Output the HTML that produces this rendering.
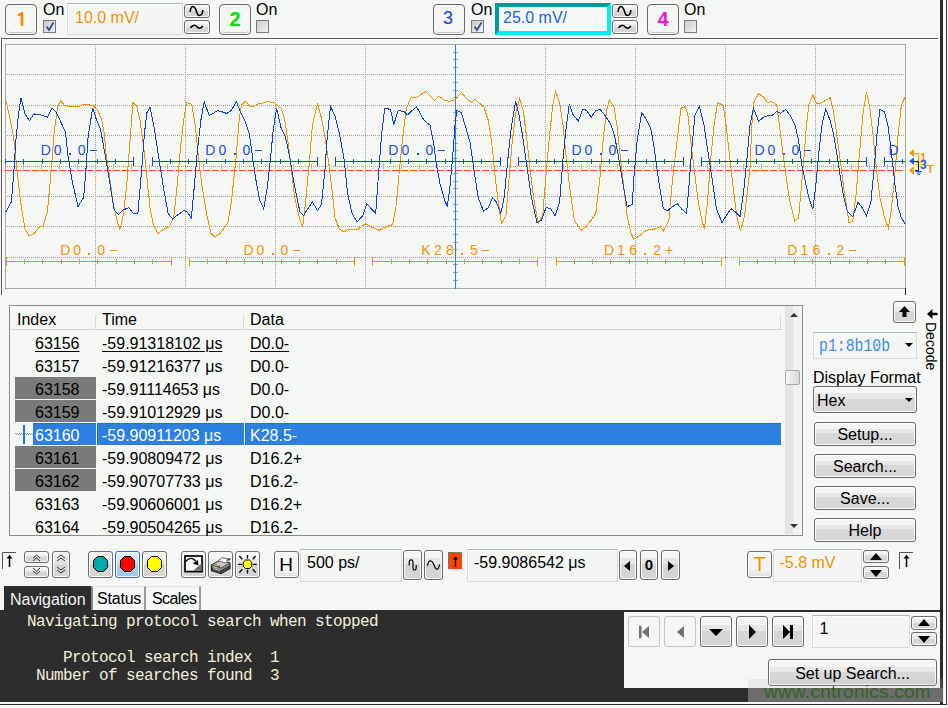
<!DOCTYPE html>
<html><head><meta charset="utf-8"><style>
*{box-sizing:border-box;margin:0;padding:0}
html,body{width:948px;height:708px;overflow:hidden;background:#f5f7f4;font-family:"Liberation Sans",sans-serif;font-size:16px;color:#000}
.a{position:absolute}
.cbtn{position:absolute;border:1.3px solid #6a6a6a;border-radius:4px;background:#f5f7f4;text-align:center;font-size:19px;font-weight:bold;line-height:29px}
.cbtn:after{content:"";position:absolute;left:2px;right:2px;bottom:1px;height:2px;border-bottom:1px solid #c4c4c4;border-radius:0 0 3px 3px}
.chk{position:absolute;width:13px;height:13px;border:1px solid #7a7a7a;background:linear-gradient(135deg,#c9c9c9,#f4f4f4)}
.inp{position:absolute;border:1px solid #d6dae0;border-top-color:#b0b6be;background:#f4f6f3;box-shadow:inset 1px 1px 0 #fcfcfc}
.gb{position:absolute;border:1px solid #6c6c6c;border-radius:3px;box-shadow:inset 0 0 0 1px #fafafa;background:linear-gradient(#f5f5f5 0%,#f5f5f5 26%,#e7e7e7 26%,#e7e7e7 48%,#d5d5d5 48%,#d5d5d5 100%)}
.btn{position:absolute;border:1px solid #6a6a6a;border-radius:3px;box-shadow:inset 0 0 0 1px #fafafa;background:linear-gradient(#f5f5f5 0%,#f5f5f5 26%,#e8e8e8 26%,#e8e8e8 47%,#d7d7d7 47%,#d7d7d7 100%);text-align:center;font-size:16px;line-height:24px}
.row{position:absolute;height:22px;font-size:16px;line-height:22px;white-space:pre}
.mono{font-family:"Liberation Mono",monospace}
</style></head><body>

<div class="cbtn" style="left:5px;top:4px;width:32px;height:31px;color:#ff8a00"><svg width="30" height="29" style="position:absolute;left:-1px;top:-1px"><path d="M15.6 7.9 H18.2 V22 H15.6 Z M12.8 10.3 L15.8 7.9 V11.4 L12.8 12.3 Z" fill="#ff8a00"/></svg></div>
<div class="cbtn" style="left:219px;top:4px;width:32px;height:31px;color:#00e000"><span style="font-size:20px;line-height:28px">2</span></div>
<div class="cbtn" style="left:433px;top:4px;width:32px;height:31px;color:#1040e0"><span style="font-weight:normal;font-size:18px;position:relative;top:-2px;left:-1px">3</span></div>
<div class="cbtn" style="left:647px;top:4px;width:32px;height:31px;color:#ff10c8"><span style="font-size:20px;line-height:28px">4</span></div>
<div class="a" style="left:43px;top:1px;font-size:16px;line-height:18px">On</div>
<div class="a" style="left:256px;top:1px;font-size:16px;line-height:18px">On</div>
<div class="a" style="left:471px;top:1px;font-size:16px;line-height:18px">On</div>
<div class="a" style="left:684px;top:1px;font-size:16px;line-height:18px">On</div>
<div class="chk" style="left:43px;top:20px"><svg width="11" height="11" style="position:absolute;left:0;top:0"><path d="M2.5 5.5 L5 9 L9.5 1.5" stroke="#3a4f9a" stroke-width="1.8" fill="none"/></svg></div>
<div class="chk" style="left:256px;top:20px"></div>
<div class="chk" style="left:471px;top:20px"><svg width="11" height="11" style="position:absolute;left:0;top:0"><path d="M2.5 5.5 L5 9 L9.5 1.5" stroke="#3a4f9a" stroke-width="1.8" fill="none"/></svg></div>
<div class="chk" style="left:684px;top:20px"></div>
<div class="inp" style="left:67px;top:3px;width:116px;height:32px;color:#f59000;font-size:16px;line-height:28px;padding-left:7px">10.0 mV/</div>
<div class="a" style="left:495px;top:3px;width:116px;height:32px;border:4px solid;border-color:#009a9a #00eeee #00eeee #009a9a;background:#f6f8f5;color:#2060e0;font-size:16px;line-height:22px;padding-left:4px">25.0 mV/</div>
<div class="gb" style="left:184px;top:4px;width:26px;height:14px"><svg width="24" height="12" style="position:absolute;left:0;top:0"><path d="M5.2 7 C5.2 2.5,7.5 0.8,9 1.8 C10 2.5,10.8 4,11.2 5.5 C12 8.5,13.2 10.5,14.3 10.5 C16 10.5,17.8 8.5,17.8 5" stroke="#000" stroke-width="1.6" fill="none"/></svg></div>
<div class="gb" style="left:184px;top:20px;width:26px;height:14px"><svg width="24" height="12" style="position:absolute;left:0;top:0"><path d="M5.5 6.8 C7.5 4,10 3.5,12 5.8 C13.5 7.8,16 7.8,17.8 5" stroke="#000" stroke-width="1.5" fill="none"/></svg></div>
<div class="gb" style="left:612px;top:4px;width:26px;height:14px"><svg width="24" height="12" style="position:absolute;left:0;top:0"><path d="M5.2 7 C5.2 2.5,7.5 0.8,9 1.8 C10 2.5,10.8 4,11.2 5.5 C12 8.5,13.2 10.5,14.3 10.5 C16 10.5,17.8 8.5,17.8 5" stroke="#000" stroke-width="1.6" fill="none"/></svg></div>
<div class="gb" style="left:612px;top:20px;width:26px;height:14px"><svg width="24" height="12" style="position:absolute;left:0;top:0"><path d="M5.5 6.8 C7.5 4,10 3.5,12 5.8 C13.5 7.8,16 7.8,17.8 5" stroke="#000" stroke-width="1.5" fill="none"/></svg></div>
<div class="a" style="left:1px;top:38px;width:937px;height:1px;background:#5a5a5a"></div><div class="a" style="left:2px;top:39px;width:938px;height:1px;background:#ffffff"></div>
<div class="a" style="left:1px;top:38px;width:1px;height:257px;background:#5a5a5a"></div><div class="a" style="left:2px;top:39px;width:1px;height:256px;background:#ffffff"></div>
<div class="a" style="left:940px;top:0px;width:3px;height:705px;background:#2b2b2b"></div>
<div class="a" style="left:946px;top:0px;width:1px;height:705px;background:#3a3a3a"></div>
<svg class="a" style="left:0;top:0" width="948" height="300">
<path d="M6 45.5 H905 M6.5 45 V288" stroke="#ffffff" stroke-width="1"/>
<rect x="5.5" y="44.5" width="900" height="244" fill="none" stroke="#a8a8a8" stroke-width="1"/>
<path d="M95.5 44 V288 M185.5 44 V288 M275.5 44 V288 M365.5 44 V288 M455.5 44 V288 M545.5 44 V288 M635.5 44 V288 M725.5 44 V288 M815.5 44 V288 M5 74.5 H905 M5 105.5 H905 M5 135.5 H905 M5 166.5 H905 M5 196.5 H905 M5 226.5 H905 M5 257.5 H905" stroke="#a0a0a0" stroke-width="1" stroke-dasharray="1 1" fill="none"/>
<path d="M23.5 164 V169 M41.5 164 V169 M59.5 164 V169 M77.5 164 V169 M95.5 164 V169 M113.5 164 V169 M131.5 164 V169 M149.5 164 V169 M167.5 164 V169 M185.5 164 V169 M203.5 164 V169 M221.5 164 V169 M239.5 164 V169 M257.5 164 V169 M275.5 164 V169 M293.5 164 V169 M311.5 164 V169 M329.5 164 V169 M347.5 164 V169 M365.5 164 V169 M383.5 164 V169 M401.5 164 V169 M419.5 164 V169 M437.5 164 V169 M455.5 164 V169 M473.5 164 V169 M491.5 164 V169 M509.5 164 V169 M527.5 164 V169 M545.5 164 V169 M563.5 164 V169 M581.5 164 V169 M599.5 164 V169 M617.5 164 V169 M635.5 164 V169 M653.5 164 V169 M671.5 164 V169 M689.5 164 V169 M707.5 164 V169 M725.5 164 V169 M743.5 164 V169 M761.5 164 V169 M779.5 164 V169 M797.5 164 V169 M815.5 164 V169 M833.5 164 V169 M851.5 164 V169 M869.5 164 V169 M887.5 164 V169" stroke="#b0b0b0" stroke-width="1"/>
<path d="M5 170.5 H905" stroke="#ff4a10" stroke-width="1.1" stroke-dasharray="7 2"/>
<path d="M453 52.5 H458 M453 59.5 H458 M453 67.5 H458 M453 82.5 H458 M453 90.5 H458 M453 97.5 H458 M453 112.5 H458 M453 120.5 H458 M453 128.5 H458 M453 143.5 H458 M453 150.5 H458 M453 158.5 H458 M453 173.5 H458 M453 181.5 H458 M453 188.5 H458 M453 204.5 H458 M453 211.5 H458 M453 219.5 H458 M453 234.5 H458 M453 242.5 H458 M453 249.5 H458 M453 264.5 H458 M453 272.5 H458 M453 280.5 H458" stroke="#a8a8a8" stroke-width="1"/>
<path d="M455.5 45 V289" stroke="#2a80e0" stroke-width="1.1"/>
<polyline points="5.6,99.2 9.0,114.0 13.6,136.5 17.0,170.0 20.3,200.0 24.9,229.0 29.4,236.0 33.9,233.7 39.5,226.9 42.9,226.9 47.5,211.0 50.8,175.0 54.2,132.0 57.6,107.0 60.6,100.8 64.4,105.3 67.8,106.4 79.0,106.4 83.6,104.4 92.7,105.3 97.2,109.4 101.7,119.5 104.0,132.0 106.2,154.6 109.6,177.2 113.0,202.0 116.4,217.9 119.8,230.3 123.2,215.6 126.6,186.2 130.0,141.0 132.9,102.6 136.7,106.0 140.1,120.7 144.6,154.6 148.0,188.5 150.0,207.7 153.4,224.6 157.9,233.7 163.6,229.2 169.2,226.9 173.7,217.9 177.1,186.2 180.5,147.8 183.9,118.4 186.6,102.6 191.8,104.4 195.2,125.2 198.6,159.1 202.0,186.2 206.5,213.3 211.0,233.7 214.4,237.0 220.0,233.7 228.0,222.4 231.4,202.0 235.9,159.1 239.3,118.4 241.5,104.9 246.0,100.8 249.4,106.0 254.0,106.7 258.5,103.7 263.0,103.0 267.5,101.5 273.2,102.6 277.7,106.0 281.0,108.2 284.5,118.4 287.9,141.0 291.2,168.1 294.6,197.5 300.0,220.1 302.7,226.9 305.6,202.0 309.0,165.9 312.4,125.2 317.6,103.3 321.5,118.4 324.9,136.5 328.2,159.1 331.6,186.2 335.0,217.9 339.5,229.2 344.0,231.9 348.6,229.2 357.6,229.6 365.5,223.5 371.2,226.9 379.1,230.3 384.7,227.3 392.7,224.6 396.0,206.6 399.4,170.4 402.8,136.5 406.2,109.4 410.7,98.1 417.5,96.9 425.4,91.3 429.9,95.8 434.5,100.3 439.0,96.3 444.6,100.3 450.0,101.5 455.6,99.2 461.3,92.4 467.0,99.2 471.5,102.6 474.9,99.2 483.9,107.1 488.4,120.7 491.8,143.3 495.2,177.2 498.6,204.3 501.5,223.5 506.0,215.6 508.8,181.7 512.1,143.3 515.5,113.9 519.6,98.5 523.4,111.6 526.8,138.8 530.2,170.4 533.6,197.5 538.1,223.5 542.7,215.6 546.0,175.0 549.4,136.5 552.8,104.9 555.5,91.3 559.6,102.6 563.0,125.2 566.4,159.1 569.8,188.5 574.3,220.1 581.1,230.3 585.6,226.9 591.2,220.1 595.8,213.3 600.0,177.2 603.4,136.5 606.8,109.4 609.5,99.9 614.0,107.1 616.9,125.2 620.3,156.8 623.7,186.2 627.1,215.6 630.5,231.4 633.4,239.3 639.5,235.9 646.3,230.3 654.2,229.2 659.9,226.4 663.3,231.0 668.9,220.1 672.3,181.7 676.8,143.3 680.9,108.2 685.4,106.7 688.1,116.2 691.5,147.8 694.9,174.9 698.3,202.0 701.7,220.1 704.4,229.2 707.3,204.3 710.7,159.1 714.1,125.2 717.5,102.6 723.2,105.3 726.6,129.7 729.9,159.1 733.3,188.5 736.7,215.6 740.6,231.0 744.6,215.6 748.0,186.2 750.0,168.1 751.8,125.2 754.1,101.5 758.6,93.6 763.6,97.0 767.6,102.6 771.5,101.5 776.7,104.9 779.4,125.2 782.8,152.3 786.2,177.2 789.5,199.8 794.7,221.2 798.6,217.9 800.8,193.0 804.2,154.6 806.5,125.2 808.8,104.9 812.8,94.7 816.7,103.7 820.1,103.7 830.2,97.6 833.6,111.6 837.0,136.5 840.4,161.4 843.8,188.5 849.0,222.8 852.8,221.2 856.2,193.0 859.6,152.3 863.0,113.9 866.4,92.4 869.8,107.1 873.2,136.5 876.6,170.4 879.9,197.5 884.5,217.9 888.3,228.0 891.2,211.1 894.6,177.2 898.0,136.5 901.4,104.9 905.0,97.5" fill="none" stroke="#f59000" stroke-width="1" shape-rendering="crispEdges"/>
<polyline points="5.6,212.2 11.3,202.0 13.6,175.0 15.8,141.0 18.1,118.4 20.8,97.6 24.9,113.9 29.4,120.7 33.9,113.9 40.7,115.0 47.5,117.3 52.0,108.2 56.5,112.8 65.5,132.0 67.8,154.6 72.3,181.7 78.0,206.6 83.6,197.5 85.9,170.4 88.1,136.5 92.7,108.2 96.0,118.4 100.6,129.7 105.1,154.6 109.6,181.7 114.1,209.9 118.6,214.5 123.2,209.9 128.8,207.7 133.3,213.3 137.9,213.3 141.2,175.0 144.6,132.0 146.9,112.8 150.0,107.1 154.5,129.7 159.0,159.1 163.6,188.5 168.1,213.3 172.6,219.0 178.2,214.5 183.9,210.6 187.3,212.2 191.4,217.9 194.1,188.5 197.5,150.0 200.8,120.7 204.2,101.5 209.2,115.7 217.8,110.5 226.8,113.4 231.4,110.5 236.3,101.5 240.4,111.6 244.9,120.7 249.4,134.2 252.8,159.1 256.2,181.7 259.6,199.8 263.7,208.8 267.5,186.2 270.9,154.6 273.2,129.7 276.6,108.2 281.0,127.5 285.6,137.6 290.1,159.1 294.6,186.2 300.0,212.2 303.4,215.6 307.9,208.8 312.4,202.0 317.6,210.6 321.5,204.3 324.9,170.4 327.1,138.8 330.5,106.0 335.0,116.2 339.5,134.2 344.1,159.1 347.5,193.0 352.0,213.3 357.0,221.9 362.8,215.6 366.7,203.8 375.7,213.3 378.0,181.7 381.4,136.5 384.7,108.2 390.4,109.4 393.8,124.1 398.3,110.5 404.0,111.6 407.3,115.0 416.4,106.7 424.3,120.7 430.0,125.2 433.3,141.0 436.7,165.9 440.1,184.0 444.6,199.8 447.3,207.0 450.0,186.2 452.7,156.8 455.0,125.2 456.8,110.5 461.3,112.8 465.8,127.5 470.3,143.3 473.7,168.1 478.2,197.5 483.4,211.1 488.4,207.7 492.5,197.5 496.3,202.0 500.8,213.3 504.2,197.5 507.6,161.4 511.0,129.7 515.5,101.5 518.9,113.9 522.3,134.2 526.8,165.9 531.4,197.5 537.0,222.4 541.5,220.1 546.0,207.7 550.6,208.4 555.1,215.6 559.6,202.0 563.0,159.1 566.4,125.2 569.3,104.4 573.2,115.0 578.4,121.1 582.9,108.9 586.7,110.5 591.2,117.3 595.8,110.5 600.0,109.4 605.6,116.2 611.3,125.2 614.7,136.5 618.1,154.6 622.6,181.7 627.1,206.6 632.3,204.3 633.9,177.2 637.3,138.8 641.8,112.8 646.3,119.5 650.8,128.6 654.2,147.8 658.8,181.7 663.3,208.8 667.8,210.6 672.3,206.6 677.5,203.8 681.4,208.8 686.6,213.3 689.3,181.7 691.5,152.3 694.9,115.0 699.4,106.7 704.0,125.2 707.3,147.8 711.9,177.2 716.4,208.8 722.0,222.4 727.7,213.3 731.1,208.8 735.6,212.2 740.1,216.7 743.5,193.0 746.9,159.1 750.0,125.2 753.4,108.2 758.6,121.1 763.6,117.3 769.2,115.0 772.6,115.0 777.1,111.2 780.5,113.4 785.7,109.4 790.7,116.2 795.2,125.2 798.6,141.0 802.0,165.9 805.4,181.7 808.8,197.5 812.8,209.3 815.5,188.5 818.9,152.3 821.9,125.2 825.7,108.9 830.2,120.7 833.6,134.2 837.0,154.6 840.4,177.2 843.8,197.5 847.2,211.1 852.8,216.7 858.0,202.0 863.0,208.8 866.4,216.0 870.9,202.0 874.3,165.9 877.0,134.2 879.9,109.4 884.5,111.6 887.9,125.2 891.2,150.0 894.6,181.7 898.0,206.6 901.4,217.9 905.0,223.5" fill="none" stroke="#0a40e0" stroke-width="1" shape-rendering="crispEdges"/>
<path d="M5.6 161.5 H134.1 M133.5 157 V166 M5.5 159 V164 M23.5 159 V164 M42.5 159 V164 M60.5 159 V164 M78.5 159 V164 M97.5 159 V164 M115.5 159 V164 M152.2 161.5 H317.2 M152.5 157 V166 M317.5 157 V166 M170.5 159 V164 M188.5 159 V164 M206.5 159 V164 M225.5 159 V164 M243.5 159 V164 M261.5 159 V164 M280.5 159 V164 M298.5 159 V164 M335.3 161.5 H500.3 M335.5 157 V166 M500.5 157 V166 M353.5 159 V164 M371.5 159 V164 M390.5 159 V164 M408.5 159 V164 M426.5 159 V164 M445.5 159 V164 M463.5 159 V164 M481.5 159 V164 M518.3 161.5 H683.3 M518.5 157 V166 M683.5 157 V166 M536.5 159 V164 M554.5 159 V164 M573.5 159 V164 M591.5 159 V164 M609.5 159 V164 M628.5 159 V164 M646.5 159 V164 M664.5 159 V164 M701.4 161.5 H866.4 M701.5 157 V166 M866.5 157 V166 M719.5 159 V164 M737.5 159 V164 M756.5 159 V164 M774.5 159 V164 M792.5 159 V164 M811.5 159 V164 M829.5 159 V164 M847.5 159 V164 M884.5 161.5 H905.0 M884.5 157 V166 M902.5 159 V164" stroke="#1048e0" stroke-width="1" fill="none" shape-rendering="crispEdges"/>
<path d="M6.3 261.5 H171.3 M6.5 257 V266 M171.5 257 V266 M24.5 259 V264 M42.5 259 V264 M61.5 259 V264 M79.5 259 V264 M97.5 259 V264 M116.5 259 V264 M134.5 259 V264 M152.5 259 V264 M189.6 261.5 H354.6 M189.5 257 V266 M354.5 257 V266 M207.5 259 V264 M226.5 259 V264 M244.5 259 V264 M262.5 259 V264 M281.5 259 V264 M299.5 259 V264 M317.5 259 V264 M336.5 259 V264 M372.9 261.5 H537.9 M372.5 257 V266 M537.5 257 V266 M391.5 259 V264 M409.5 259 V264 M427.5 259 V264 M446.5 259 V264 M464.5 259 V264 M482.5 259 V264 M501.5 259 V264 M519.5 259 V264 M556.2 261.5 H721.2 M556.5 257 V266 M721.5 257 V266 M574.5 259 V264 M592.5 259 V264 M610.5 259 V264 M629.5 259 V264 M647.5 259 V264 M665.5 259 V264 M684.5 259 V264 M702.5 259 V264 M739.5 261.5 H904.5 M739.5 257 V266 M904.5 257 V266 M757.5 259 V264 M775.5 259 V264 M794.5 259 V264 M812.5 259 V264 M830.5 259 V264 M849.5 259 V264 M867.5 259 V264 M885.5 259 V264" stroke="#f59000" stroke-width="1" fill="none" shape-rendering="crispEdges"/>
<text x="45.7" y="155" text-anchor="middle" fill="#1a50e0" font-family="Liberation Sans" font-size="14">D</text>
<text x="57.7" y="155" text-anchor="middle" fill="#1a50e0" font-family="Liberation Sans" font-size="14">0</text>
<rect x="69" y="153" width="2" height="2" fill="#1a50e0"/>
<text x="81.7" y="155" text-anchor="middle" fill="#1a50e0" font-family="Liberation Sans" font-size="14">0</text>
<rect x="90" y="150" width="7" height="1" fill="#1a50e0"/>
<text x="210.4" y="155" text-anchor="middle" fill="#1a50e0" font-family="Liberation Sans" font-size="14">D</text>
<text x="222.4" y="155" text-anchor="middle" fill="#1a50e0" font-family="Liberation Sans" font-size="14">0</text>
<rect x="234" y="153" width="2" height="2" fill="#1a50e0"/>
<text x="246.4" y="155" text-anchor="middle" fill="#1a50e0" font-family="Liberation Sans" font-size="14">0</text>
<rect x="255" y="150" width="7" height="1" fill="#1a50e0"/>
<text x="393.4" y="155" text-anchor="middle" fill="#1a50e0" font-family="Liberation Sans" font-size="14">D</text>
<text x="405.4" y="155" text-anchor="middle" fill="#1a50e0" font-family="Liberation Sans" font-size="14">0</text>
<rect x="417" y="153" width="2" height="2" fill="#1a50e0"/>
<text x="429.4" y="155" text-anchor="middle" fill="#1a50e0" font-family="Liberation Sans" font-size="14">0</text>
<rect x="438" y="150" width="7" height="1" fill="#1a50e0"/>
<text x="576.5" y="155" text-anchor="middle" fill="#1a50e0" font-family="Liberation Sans" font-size="14">D</text>
<text x="588.5" y="155" text-anchor="middle" fill="#1a50e0" font-family="Liberation Sans" font-size="14">0</text>
<rect x="600" y="153" width="2" height="2" fill="#1a50e0"/>
<text x="612.5" y="155" text-anchor="middle" fill="#1a50e0" font-family="Liberation Sans" font-size="14">0</text>
<rect x="621" y="150" width="7" height="1" fill="#1a50e0"/>
<text x="759.5" y="155" text-anchor="middle" fill="#1a50e0" font-family="Liberation Sans" font-size="14">D</text>
<text x="771.5" y="155" text-anchor="middle" fill="#1a50e0" font-family="Liberation Sans" font-size="14">0</text>
<rect x="783" y="153" width="2" height="2" fill="#1a50e0"/>
<text x="795.5" y="155" text-anchor="middle" fill="#1a50e0" font-family="Liberation Sans" font-size="14">0</text>
<rect x="804" y="150" width="7" height="1" fill="#1a50e0"/>
<text x="893.5" y="155" text-anchor="middle" fill="#1a50e0" font-family="Liberation Sans" font-size="14">D</text>
<text x="65.2" y="255" text-anchor="middle" fill="#f59000" font-family="Liberation Sans" font-size="14">D</text>
<text x="77.2" y="255" text-anchor="middle" fill="#f59000" font-family="Liberation Sans" font-size="14">0</text>
<rect x="88" y="253" width="2" height="2" fill="#f59000"/>
<text x="101.2" y="255" text-anchor="middle" fill="#f59000" font-family="Liberation Sans" font-size="14">0</text>
<rect x="110" y="250" width="7" height="1" fill="#f59000"/>
<text x="248.5" y="255" text-anchor="middle" fill="#f59000" font-family="Liberation Sans" font-size="14">D</text>
<text x="260.5" y="255" text-anchor="middle" fill="#f59000" font-family="Liberation Sans" font-size="14">0</text>
<rect x="272" y="253" width="2" height="2" fill="#f59000"/>
<text x="284.5" y="255" text-anchor="middle" fill="#f59000" font-family="Liberation Sans" font-size="14">0</text>
<rect x="293" y="250" width="7" height="1" fill="#f59000"/>
<text x="425.8" y="255" text-anchor="middle" fill="#f59000" font-family="Liberation Sans" font-size="14">K</text>
<text x="437.8" y="255" text-anchor="middle" fill="#f59000" font-family="Liberation Sans" font-size="14">2</text>
<text x="449.8" y="255" text-anchor="middle" fill="#f59000" font-family="Liberation Sans" font-size="14">8</text>
<rect x="461" y="253" width="2" height="2" fill="#f59000"/>
<text x="473.8" y="255" text-anchor="middle" fill="#f59000" font-family="Liberation Sans" font-size="14">5</text>
<rect x="482" y="250" width="7" height="1" fill="#f59000"/>
<text x="609.1" y="255" text-anchor="middle" fill="#f59000" font-family="Liberation Sans" font-size="14">D</text>
<text x="621.1" y="255" text-anchor="middle" fill="#f59000" font-family="Liberation Sans" font-size="14">1</text>
<text x="633.1" y="255" text-anchor="middle" fill="#f59000" font-family="Liberation Sans" font-size="14">6</text>
<rect x="644" y="253" width="2" height="2" fill="#f59000"/>
<text x="657.1" y="255" text-anchor="middle" fill="#f59000" font-family="Liberation Sans" font-size="14">2</text>
<text x="669.1" y="255" text-anchor="middle" fill="#f59000" font-family="Liberation Sans" font-size="14">+</text>
<text x="792.4" y="255" text-anchor="middle" fill="#f59000" font-family="Liberation Sans" font-size="14">D</text>
<text x="804.4" y="255" text-anchor="middle" fill="#f59000" font-family="Liberation Sans" font-size="14">1</text>
<text x="816.4" y="255" text-anchor="middle" fill="#f59000" font-family="Liberation Sans" font-size="14">6</text>
<rect x="828" y="253" width="2" height="2" fill="#f59000"/>
<text x="840.4" y="255" text-anchor="middle" fill="#f59000" font-family="Liberation Sans" font-size="14">2</text>
<rect x="849" y="250" width="7" height="1" fill="#f59000"/>
<path d="M909 153 L914 149 L914 157 Z" fill="#f59a10"/><path d="M909 161 L914 157.5 L914 165 Z" fill="#1a5ae8"/><path d="M909 170.5 L914 166 L914 175 Z" fill="#f59a10"/>
<text x="920" y="160.5" fill="#f59000" font-family="Liberation Sans" font-size="11.5" font-weight="bold">1</text>
<text x="920" y="169" fill="#1a5ae8" font-family="Liberation Sans" font-size="12" font-weight="bold">3</text>
<text x="927" y="173" fill="#f59a10" font-family="Liberation Sans" font-size="11" font-weight="bold">T</text>
<path d="M905.5 288 V295" stroke="#222" stroke-width="1"/>
<path d="M914 153.5 H918.5 V161" stroke="#f59a10" stroke-width="1.2" fill="none"/><path d="M915 162.5 H922 M915 164.5 H922 M916 166.5 H921" stroke="#f5a020" stroke-width="0.8"/><path d="M914 161.5 H918.5 V170.5 M915 170.5 H919" stroke="#222" stroke-width="1" fill="none" shape-rendering="crispEdges"/><path d="M915.5 171.5 H922 M916.5 173 H921 M917.5 174.6 H920" stroke="#1a5ae8" stroke-width="1"/>
</svg>
<div class="a" style="left:9px;top:305px;width:794px;height:231px;border:1px solid #8c8c8c;background:#f5f7f4"></div>
<div class="a" style="left:11px;top:329px;width:771px;height:1px;background:#d6d6d6"></div>
<div class="a" style="left:95px;top:315px;width:1px;height:14px;background:#dcdcdc"></div>
<div class="a" style="left:243px;top:315px;width:1px;height:14px;background:#dcdcdc"></div>
<div class="a" style="left:780px;top:315px;width:1px;height:14px;background:#dcdcdc"></div>
<div class="row" style="left:17px;top:309px">Index</div>
<div class="row" style="left:102px;top:309px">Time</div>
<div class="row" style="left:250px;top:309px">Data</div>
<div class="row" style="left:35px;top:333px;color:#000;text-decoration:underline;text-underline-offset:2px;">63156</div>
<div class="row" style="left:102px;top:333px;color:#000;text-decoration:underline;text-underline-offset:2px;">-59.91318102 μs</div>
<div class="row" style="left:250px;top:333px;color:#000;text-decoration:underline;text-underline-offset:2px;">D0.0-</div>
<div class="row" style="left:35px;top:356px;color:#000;">63157</div>
<div class="row" style="left:102px;top:356px;color:#000;">-59.91216377 μs</div>
<div class="row" style="left:250px;top:356px;color:#000;">D0.0-</div>
<div class="a" style="left:15px;top:377px;width:81px;height:22px;background:#7a7a7a"></div>
<div class="row" style="left:35px;top:379px;color:#000;">63158</div>
<div class="row" style="left:102px;top:379px;color:#000;">-59.91114653 μs</div>
<div class="row" style="left:250px;top:379px;color:#000;">D0.0-</div>
<div class="a" style="left:15px;top:400px;width:81px;height:22px;background:#7a7a7a"></div>
<div class="row" style="left:35px;top:402px;color:#000;">63159</div>
<div class="row" style="left:102px;top:402px;color:#000;">-59.91012929 μs</div>
<div class="row" style="left:250px;top:402px;color:#000;">D0.0-</div>
<div class="a" style="left:33px;top:423px;width:63px;height:22px;background:#2d80e0;border-top:1px solid #1a70e0"></div>
<div class="a" style="left:97px;top:423px;width:684px;height:22px;background:#2d80e0;border-top:1px solid #1a70e0;border-left:1px solid #1a70e0"></div>
<div class="a" style="left:244px;top:423px;width:1px;height:22px;background:#f8faf8"></div><div class="a" style="left:245px;top:424px;width:1px;height:21px;background:#1a70e0"></div>
<div class="a" style="left:15px;top:433px;width:18px;height:1px;background:repeating-linear-gradient(90deg,#a0a0a0 0 1px,transparent 1px 2px)"></div><div class="a" style="left:15px;top:434px;width:18px;height:1px;background:repeating-linear-gradient(90deg,transparent 0 1px,#a0a0a0 1px 2px)"></div>
<div class="a" style="left:23px;top:425px;width:2px;height:19px;background:#1f74e8"></div>
<div class="row" style="left:35px;top:425px;color:#fff;">63160</div>
<div class="row" style="left:102px;top:425px;color:#fff;">-59.90911203 μs</div>
<div class="row" style="left:250px;top:425px;color:#fff;">K28.5-</div>
<div class="a" style="left:15px;top:446px;width:81px;height:22px;background:#7a7a7a"></div>
<div class="row" style="left:35px;top:448px;color:#000;">63161</div>
<div class="row" style="left:102px;top:448px;color:#000;">-59.90809472 μs</div>
<div class="row" style="left:250px;top:448px;color:#000;">D16.2+</div>
<div class="a" style="left:15px;top:469px;width:81px;height:22px;background:#7a7a7a"></div>
<div class="row" style="left:35px;top:471px;color:#000;">63162</div>
<div class="row" style="left:102px;top:471px;color:#000;">-59.90707733 μs</div>
<div class="row" style="left:250px;top:471px;color:#000;">D16.2-</div>
<div class="row" style="left:35px;top:494px;color:#000;">63163</div>
<div class="row" style="left:102px;top:494px;color:#000;">-59.90606001 μs</div>
<div class="row" style="left:250px;top:494px;color:#000;">D16.2+</div>
<div class="row" style="left:35px;top:517px;color:#000;">63164</div>
<div class="row" style="left:102px;top:517px;color:#000;">-59.90504265 μs</div>
<div class="row" style="left:250px;top:517px;color:#000;">D16.2-</div>
<div class="a" style="left:785px;top:306px;width:16px;height:228px;background:linear-gradient(90deg,#e4e4e4 0,#e4e4e4 8px,#f6f6f6 8px,#ececec 9px,#f2f2f2 9px)"></div>
<div class="a" style="left:790px;top:313px;width:0;height:0;border-left:4px solid transparent;border-right:4px solid transparent;border-bottom:4px solid #333"></div>
<div class="a" style="left:790px;top:524px;width:0;height:0;border-left:4px solid transparent;border-right:4px solid transparent;border-top:4px solid #333"></div>
<div class="a" style="left:785px;top:370px;width:15px;height:15px;border:1px solid #aaa;border-radius:2px;background:linear-gradient(90deg,#f8f8f8,#d8d8d8)"></div>
<div class="gb" style="left:893px;top:301px;width:23px;height:22px"><svg width="21" height="20" style="position:absolute;left:0;top:0"><path d="M10.5 4 L5 10 H8.5 V15 H12.5 V10 H16 Z" fill="#000"/></svg></div>
<svg class="a" style="left:922px;top:306px" width="16" height="16"><path d="M5 8 L10.5 3 V13 Z M10 6.8 H15.5 V9.2 H10 Z" fill="#000"/></svg>
<div class="a" style="left:938px;top:322px;transform-origin:0 0;transform:rotate(90deg);font-size:14px;line-height:14px;white-space:nowrap">Decode</div>
<div class="inp" style="left:813px;top:332px;width:104px;height:27px"><div class="a" style="left:4.5px;top:1px;color:#3a8ee8;font-family:&quot;Liberation Mono&quot;,monospace;font-size:18.5px;line-height:25px;transform:scaleX(0.80);transform-origin:0 0;white-space:nowrap">p1:8b10b</div></div>
<div class="a" style="left:905px;top:343px;width:0;height:0;border-left:4px solid transparent;border-right:4px solid transparent;border-top:4px solid #000"></div>
<div class="row" style="left:813px;top:367px;font-size:16px">Display Format</div>
<div class="btn" style="left:813px;top:386px;width:104px;height:27px;text-align:left;padding-left:3px;line-height:27px">Hex</div>
<div class="a" style="left:905px;top:398px;width:0;height:0;border-left:4px solid transparent;border-right:4px solid transparent;border-top:4px solid #000"></div>
<div class="btn" style="left:814px;top:422px;width:102px;height:24px">Setup...</div>
<div class="btn" style="left:814px;top:454px;width:102px;height:24px">Search...</div>
<div class="btn" style="left:814px;top:486px;width:102px;height:24px">Save...</div>
<div class="btn" style="left:814px;top:518px;width:102px;height:24px">Help</div>
<svg class="a" style="left:0;top:548px" width="20" height="24"><path d="M2.5 21 V4.5 H16" stroke="#555" stroke-width="1" fill="none"/><path d="M9.5 19 V9" stroke="#000" stroke-width="1.5" fill="none"/><path d="M6.5 10.5 L9.5 6.8 L12.5 10.5 Z" fill="#000"/></svg>
<svg class="a" style="left:897px;top:548px" width="20" height="24"><path d="M2.5 21 V4.5 H16" stroke="#555" stroke-width="1" fill="none"/><path d="M9.5 19 V9" stroke="#000" stroke-width="1.5" fill="none"/><path d="M6.5 10.5 L9.5 6.8 L12.5 10.5 Z" fill="#000"/></svg>
<div class="gb" style="left:24px;top:551px;width:25px;height:12px"><svg width="23" height="10" style="position:absolute;left:0;top:0"><path d="M8 6 L11.5 3 L15 6 M8 9 L11.5 6 L15 9" stroke="#333" stroke-width="1" fill="none"/></svg></div>
<div class="gb" style="left:24px;top:566px;width:25px;height:12px"><svg width="23" height="10" style="position:absolute;left:0;top:0"><path d="M8 1 L11.5 4 L15 1 M8 4 L11.5 7 L15 4" stroke="#333" stroke-width="1" fill="none"/></svg></div>
<div class="gb" style="left:52px;top:551px;width:18px;height:27px;background:linear-gradient(#f0f0f0,#e0e0e0 50%,#d4d4d4 50%,#d8d8d8)"><svg width="16" height="25" style="position:absolute;left:0;top:0"><path d="M4 6 L8 3 L12 6 M4 9 L8 6 L12 9" stroke="#333" stroke-width="1" fill="none"/><path d="M4 15 L8 18 L12 15 M4 18 L8 21 L12 18" stroke="#333" stroke-width="1" fill="none"/></svg></div>
<div class="gb" style="left:88px;top:551px;width:25px;height:27px"><svg width="23" height="25" style="position:absolute;left:0;top:0"><path d="M8.5 4.5 H14.5 L18.5 8.5 V15.5 L14.5 19.5 H8.5 L4.5 15.5 V8.5 Z" fill="#00a8a8" stroke="#000" stroke-width="1"/></svg></div>
<div class="gb" style="left:115px;top:551px;width:25px;height:27px;border-color:#3d6ea8;background:linear-gradient(#e6f2fb,#bcdcf3 50%,#a8d0ee 50%,#98c6ea)"><svg width="23" height="25" style="position:absolute;left:0;top:0"><path d="M8.5 4.5 H14.5 L18.5 8.5 V15.5 L14.5 19.5 H8.5 L4.5 15.5 V8.5 Z" fill="#ff0000" stroke="#000" stroke-width="1"/></svg></div>
<div class="gb" style="left:142px;top:551px;width:25px;height:27px"><svg width="23" height="25" style="position:absolute;left:0;top:0"><path d="M8.5 4.5 H14.5 L18.5 8.5 V15.5 L14.5 19.5 H8.5 L4.5 15.5 V8.5 Z" fill="#ffff00" stroke="#000" stroke-width="1"/></svg></div>
<div class="gb" style="left:181px;top:551px;width:25px;height:27px"><svg width="23" height="25" style="position:absolute;left:0;top:0"><rect x="3" y="4" width="17" height="15.6" fill="#fbfbfb" stroke="#000" stroke-width="1.7"/><path d="M19.8 11.2 V18.7 H11 Z" fill="#6e6e6e"/><path d="M3.2 9.8 Q9.3 3.2 13.8 9.2" stroke="#000" stroke-width="1.4" fill="none"/><path d="M10.8 11.6 L16.2 8 L16.2 13.4 Z" fill="#000"/></svg></div>
<div class="gb" style="left:208px;top:551px;width:25px;height:27px"><svg width="23" height="25" style="position:absolute;left:0;top:0"><path d="M2.5 15.5 L2.5 18.5 L12 21.5 L21 16.5 V13.5" stroke="#222" stroke-width="1.2" fill="#555"/><path d="M2.5 13 L11.5 8 L21 11 L21 14 L12 19 L2.5 16 Z" fill="#8a8a8a" stroke="#222" stroke-width="1"/><path d="M2.5 13 L11.5 8 L21 11 L12 16 Z" fill="#c8c8c8" stroke="#333" stroke-width="0.8"/><path d="M9 9 L13 5.5 L21 7.5 L17 11 Z" fill="#fff" stroke="#444" stroke-width="0.8"/><path d="M17.5 9 Q18.5 6.2 21.5 6.8" stroke="#222" stroke-width="1" fill="none"/><rect x="5.5" y="12" width="2.5" height="1.4" fill="#10d010"/><rect x="8.5" y="13.6" width="2.5" height="1.4" fill="#e02020"/><path d="M4 16.5 L11 18.6 M5 14.8 L8 15.8" stroke="#eee" stroke-width="0.7"/></svg></div>
<div class="gb" style="left:235px;top:551px;width:25px;height:27px"><svg width="23" height="25" style="position:absolute;left:0;top:0"><path d="M9.6 8 H13.4 L15.8 10.4 V14.2 L13.4 16.6 H9.6 L7.2 14.2 V10.4 Z" fill="#ffff00" stroke="#000" stroke-width="1"/><path d="M11.5 3 V6.5 M11.5 17.8 V21.6 M2.2 12.3 H5.8 M17.2 12.3 H20.8 M3.3 4 L6.3 7.3 M16.7 17.3 L19.7 20.6 M19.7 4 L16.7 7.3 M6.3 17.3 L3.3 20.6" stroke="#000" stroke-width="1.3"/></svg></div>
<div class="gb" style="left:274px;top:551px;width:25px;height:27px;background:linear-gradient(#f6f6f6,#f2f2f2 70%,#e0e0e0)"><div class="a" style="left:0;top:0;width:22px;text-align:center;font-size:19px;line-height:25px">H</div></div>
<div class="inp" style="left:300px;top:549px;width:102px;height:33px;font-size:16px;line-height:26px;padding-left:6px">500 ps/</div>
<div class="gb" style="left:403px;top:550px;width:19px;height:30px"><svg width="17" height="28" style="position:absolute;left:0;top:0"><path d="M5.2 14.5 V11.5 Q5.2 8.8,7.1 8.8 Q9 8.8,9 11.5 V16.5 Q9 19,10.6 19 Q12.2 19,12.2 16.5 V14" stroke="#000" stroke-width="1.15" fill="none"/></svg></div>
<div class="gb" style="left:424px;top:550px;width:19px;height:30px"><svg width="17" height="28" style="position:absolute;left:0;top:0"><path d="M2.6 14.8 C2.8 11,4 9.8,5.6 9.8 C7.4 9.8,8.4 12,9.6 15.5 C10.4 17.8,11 18.3,12 18.3 C13.3 18.3,14 16.5,14.5 13.5" stroke="#000" stroke-width="1.2" fill="none"/></svg></div>
<div class="a" style="left:448px;top:552px;width:14px;height:17px;background:#ff4400;border-left:1px solid #777;border-top:1px solid #777"><svg width="13" height="16" style="position:absolute;left:0;top:0"><path d="M6.5 14 V5.5" stroke="#000" stroke-width="1.4" fill="none"/><path d="M4 6.5 L6.5 3 L9 6.5 Z" fill="#000"/></svg></div>
<div class="inp" style="left:467px;top:549px;width:151px;height:33px;font-size:16px;line-height:26px;padding-left:6px">-59.9086542 μs</div>
<div class="gb" style="left:619px;top:550px;width:18px;height:30px"><div class="a" style="left:4px;top:10px;width:0;height:0;border-top:5px solid transparent;border-bottom:5px solid transparent;border-right:6px solid #000"></div></div>
<div class="gb" style="left:640px;top:550px;width:18px;height:30px;font-size:15px;font-weight:bold;text-align:center;line-height:28px">0</div>
<div class="gb" style="left:661px;top:550px;width:19px;height:30px"><div class="a" style="left:6px;top:10px;width:0;height:0;border-top:5px solid transparent;border-bottom:5px solid transparent;border-left:6px solid #000"></div></div>
<div class="gb" style="left:747px;top:551px;width:25px;height:27px;background:linear-gradient(#f6f6f6,#f2f2f2 70%,#e0e0e0)"><div class="a" style="left:0;top:0;width:23px;text-align:center;font-size:20px;line-height:25px;color:#f59000">T</div></div>
<div class="inp" style="left:773px;top:549px;width:89px;height:33px;font-size:16px;line-height:26px;padding-left:5.5px;color:#f59000">-5.8 mV</div>
<div class="gb" style="left:863px;top:550px;width:26px;height:13px"><div class="a" style="left:6px;top:2px;width:0;height:0;border-left:6px solid transparent;border-right:6px solid transparent;border-bottom:7px solid #000"></div></div>
<div class="gb" style="left:863px;top:566px;width:26px;height:13px"><div class="a" style="left:6px;top:3px;width:0;height:0;border-left:6px solid transparent;border-right:6px solid transparent;border-top:7px solid #000"></div></div>
<div class="a" style="left:0;top:610px;width:940px;height:92px;background:#2d2d2d"></div>
<div class="a" style="left:0;top:704px;width:946px;height:1px;background:#2d2d2d"></div>
<div class="a" style="left:4px;top:586px;width:87px;height:25px;background:#2d2d2d;color:#f4f4f4;font-size:16px;line-height:28px;padding-left:6px">Navigation</div>
<div class="a" style="left:91px;top:586px;width:55px;height:24px;border-left:2px solid #888;border-top:1px solid #e4e4e4;border-right:2px solid #9a9a9a;background:#f5f7f4;font-size:16px;line-height:24px;padding-left:4px;letter-spacing:-0.2px">Status</div>
<div class="a" style="left:146px;top:586px;width:55px;height:24px;border-top:1px solid #e4e4e4;border-right:2px solid #9a9a9a;background:#f5f7f4;font-size:16px;line-height:24px;padding-left:6px;letter-spacing:-0.6px">Scales</div>
<pre class="a mono" style="left:9px;top:613px;font-size:16px;letter-spacing:-0.6px;line-height:18px;color:#f2eedc">  Navigating protocol search when stopped

      Protocol search index  1
   Number of searches found  3</pre>
<div class="a" style="left:624px;top:612px;width:316px;height:76px;background:#f5f7f4"></div>
<div class="a" style="left:628px;top:616px;width:32px;height:31px;border:1px solid #c4c4c4;border-radius:3px;background:#f4f6f3"><svg width="30" height="29" style="position:absolute;left:0;top:0"><rect x="10" y="9" width="2.5" height="12" fill="#707070"/><path d="M20 9 V21 L13 15 Z" fill="#707070"/></svg></div>
<div class="a" style="left:664px;top:616px;width:32px;height:31px;border:1px solid #c4c4c4;border-radius:3px;background:#f4f6f3"><svg width="30" height="29" style="position:absolute;left:0;top:0"><path d="M19 9 V21 L12 15 Z" fill="#707070"/></svg></div>
<div class="gb" style="left:700px;top:616px;width:32px;height:31px;border-color:#6c6c6c"><svg width="30" height="29" style="position:absolute;left:0;top:0"><path d="M8 12 H22 L15 19 Z" fill="#000"/></svg></div>
<div class="gb" style="left:736px;top:616px;width:32px;height:31px;border-color:#6c6c6c"><svg width="30" height="29" style="position:absolute;left:0;top:0"><path d="M12 8 V22 L19 15 Z" fill="#000"/></svg></div>
<div class="gb" style="left:772px;top:616px;width:32px;height:31px;border-color:#6c6c6c"><svg width="30" height="29" style="position:absolute;left:0;top:0"><path d="M10 8 V22 L17 15 Z" fill="#000"/><rect x="17" y="8" width="3" height="14" fill="#000"/></svg></div>
<div class="inp" style="left:812px;top:615px;width:98px;height:33px;font-size:16px;line-height:26px;padding-left:6.5px">1</div>
<div class="gb" style="left:911px;top:616px;width:26px;height:14px"><div class="a" style="left:6px;top:2px;width:0;height:0;border-left:6px solid transparent;border-right:6px solid transparent;border-bottom:7px solid #000"></div></div>
<div class="gb" style="left:911px;top:632px;width:26px;height:14px"><div class="a" style="left:6px;top:3px;width:0;height:0;border-left:6px solid transparent;border-right:6px solid transparent;border-top:7px solid #000"></div></div>
<div class="btn" style="left:768px;top:659px;width:169px;height:27px;line-height:27px">Set up Search...</div>
<div class="a" style="left:748px;top:679px;width:196px;height:9px;background:rgba(190,190,190,0.18)"></div><div class="a" style="left:748px;top:688px;width:196px;height:14px;background:rgba(217,217,217,0.37)"></div>
<div class="a" style="left:764px;top:681px;font-size:19px;letter-spacing:0.25px;line-height:22px;color:rgba(52,98,36,0.95);white-space:nowrap">www.cntronics.com</div>
</body></html>
